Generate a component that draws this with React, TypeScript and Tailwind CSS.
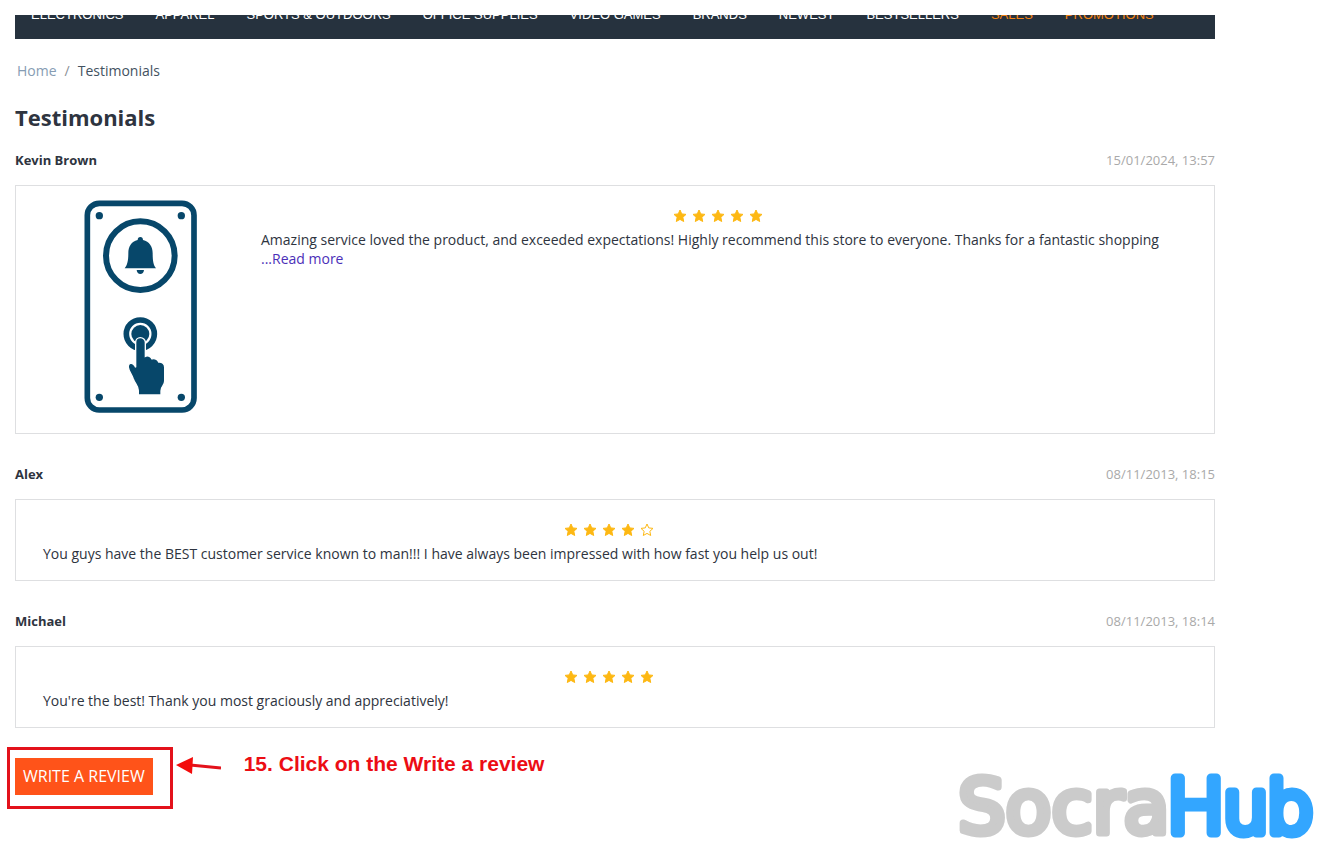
import React from 'react';

interface Testimonial {
  author: string;
  date: string;
  rating: number;
  text: string;
  hasMore?: boolean;
  hasImage?: boolean;
}

const navItems = [
  { label: 'ELECTRONICS' },
  { label: 'APPAREL' },
  { label: 'SPORTS & OUTDOORS' },
  { label: 'OFFICE SUPPLIES' },
  { label: 'VIDEO GAMES' },
  { label: 'BRANDS' },
  { label: 'NEWEST' },
  { label: 'BESTSELLERS' },
  { label: 'SALES', highlight: true },
  { label: 'PROMOTIONS', highlight: true }
];

const testimonials: Testimonial[] = [
  {
    author: 'Kevin Brown',
    date: '15/01/2024, 13:57',
    rating: 5,
    text: 'Amazing service loved the product, and exceeded expectations! Highly recommend this store to everyone. Thanks for a fantastic shopping',
    hasMore: true,
    hasImage: true
  },
  {
    author: 'Alex',
    date: '08/11/2013, 18:15',
    rating: 4,
    text: 'You guys have the BEST customer service known to man!!! I have always been impressed with how fast you help us out!'
  },
  {
    author: 'Michael',
    date: '08/11/2013, 18:14',
    rating: 5,
    text: "You're the best! Thank you most graciously and appreciatively!"
  }
];

const DoorbellImage: React.FC = () => (
  <svg viewBox="43 30 339 639" className="w-[113px] h-[213px]" fill="#07476a" aria-hidden="true">
    <rect x="53" y="40" width="320" height="620" rx="36" fill="none" stroke="#07476a" strokeWidth="17" />
    <circle cx="89" cy="77" r="11" />
    <circle cx="335" cy="77" r="11" />
    <circle cx="89" cy="622" r="11" />
    <circle cx="335" cy="622" r="11" />
    <circle cx="212" cy="197" r="103" fill="none" stroke="#07476a" strokeWidth="18" />
    {/* bell */}
    <path d="M212 141c-5 0-8 4-8 9-19 5-28 19-28 40 0 22-3 35-11 45h94c-8-10-10-23-10-45 0-21-10-35-29-40 0-5-3-9-8-9z" />
    <path d="M201 240h22c-1 8-5 12-11 12s-10-4-11-12z" />
    {/* button with pressing hand */}
    <circle cx="212" cy="432" r="42" fill="none" stroke="#07476a" strokeWidth="17" />
    <circle cx="212" cy="432" r="27" />
    <path
      d="M198 532v-75c0-8 6-14 14-14s15 6 15 14v42c6-3 16-1 20 8 8-3 17 1 20 9 10-1 18 6 18 16v41c0 14-11 17-11 29v13h-68v-13c0-15-10-20-15-35-4-13-14-24-15-35-1-14 13-18 22 0z"
      stroke="#ffffff"
      strokeWidth="4"
    />
  </svg>
);

const Star: React.FC<{ filled: boolean }> = ({ filled }) => (
  <svg
    viewBox="0 0 28 28"
    className="size-[14px]"
    fill={filled ? 'currentColor' : 'none'}
    stroke="currentColor"
    strokeWidth="2"
    strokeLinejoin="round"
  >
    <path d="M14 2l3.500 7.800 8.500 1-6.300 5.800 1.700 8.400-7.400-4.200-7.400 4.200 1.700-8.400L2 10.800l8.500-1z" />
  </svg>
);

const Stars: React.FC<{ rating: number }> = ({ rating }) => (
  <div role="img" aria-label={`${rating} / 5`} className="flex h-5 items-center justify-center gap-[5px] text-[#fdb813]">
    {[1, 2, 3, 4, 5].map(n => (
      <Star key={n} filled={n <= rating} />
    ))}
  </div>
);

const TestimonialCard: React.FC<{ item: Testimonial }> = ({ item }) => (
  <article className="mb-[30px]">
    <header className="mb-[15px] flex items-center justify-between text-[13px] leading-5">
      <h2 className="font-bold">{item.author}</h2>
      <time className="text-[#a9a9a9]">{item.date}</time>
    </header>
    <div className="flex border border-[#dedfe1] pl-[27px] pr-10">
      {item.hasImage && (
        <div className="mr-[23px] flex w-[195px] shrink-0 justify-center pt-[14px] pb-5">
          <DoorbellImage />
        </div>
      )}
      <div className="flex-1 pt-5 pb-[17px] text-sm leading-[19px]">
        <Stars rating={item.rating} />
        <p className="mt-1">
          {item.text}
          {item.hasMore && (
            <>
              <br />
              <a href="#more" className="text-[#4b2fb8]">...Read more</a>
            </>
          )}
        </p>
      </div>
    </div>
  </article>
);

const WriteReview: React.FC = () => (
  <div className="relative inline-block">
    <button type="button" className="block bg-[#ff5319] px-2 pt-2 pb-[9px] text-base leading-5 whitespace-nowrap text-white">
      WRITE A REVIEW
    </button>
    <div className="pointer-events-none absolute -top-[11px] -right-5 -bottom-[14px] -left-2 border-[3px] border-[#e3121b]" />
    <div className="absolute -top-2 left-full ml-[23px] flex items-center gap-[23px]">
      <svg viewBox="0 0 45 28" className="h-7 w-[45px]" aria-hidden="true">
        <path d="M14 15l31 3" stroke="#e3121b" strokeWidth="3" />
        <path d="M0 15L17 7l-1 17z" fill="#f30b0b" />
      </svg>
      <p className="font-['Liberation_Sans',sans-serif] text-[21px] leading-7 font-bold whitespace-nowrap text-[#ec0d14]">
        15. Click on the Write a review
      </p>
    </div>
  </div>
);

// letters are thickened with a round-joined outline for the soft look
const Watermark: React.FC = () => (
  <svg viewBox="0 0 360 80" className="absolute right-[22px] bottom-0 h-20 w-[360px]">
    <text y="69" fontSize="75" strokeLinejoin="round">
      <tspan x="2" fontFamily="'DejaVu Sans', sans-serif" strokeWidth="7" fill="#cbcbcb" stroke="#cbcbcb">
        Socra
      </tspan>
      <tspan x="212" fontFamily="Inter, sans-serif" fontWeight="300" strokeWidth="9" fill="#33a6ff" stroke="#33a6ff">
        Hub
      </tspan>
    </text>
  </svg>
);

const App: React.FC = () => {
  return (
    <div className="relative min-h-screen bg-white px-[15px] pt-[15px] font-['Open_Sans',sans-serif] text-[#2e3440]">
      <div className="max-w-[1200px]">
        <nav className="h-6 overflow-hidden bg-[#26323e]">
          <ul className="-mt-3 flex gap-8 px-4 font-['Liberation_Sans',sans-serif] text-[13px] leading-6 whitespace-nowrap">
            {navItems.map(item => (
              <li key={item.label}>
                <a href="#category" className={item.highlight ? 'text-[#f58412]' : 'text-white'}>
                  {item.label}
                </a>
              </li>
            ))}
          </ul>
        </nav>

        <div className="mt-[22px] flex gap-2 px-[2px] text-sm leading-5">
          <a href="#home" className="text-[#869cb3]">Home</a>
          <span className="text-[#8b8f96]">/</span>
          <span className="text-[#43525f]">Testimonials</span>
        </div>

        <h1 className="mt-5 mb-[17px] text-[22px] leading-8 font-bold">Testimonials</h1>

        {testimonials.map(item => (
          <TestimonialCard key={item.author} item={item} />
        ))}

        <WriteReview />
      </div>
      <Watermark />
    </div>
  );
};

export default App;
